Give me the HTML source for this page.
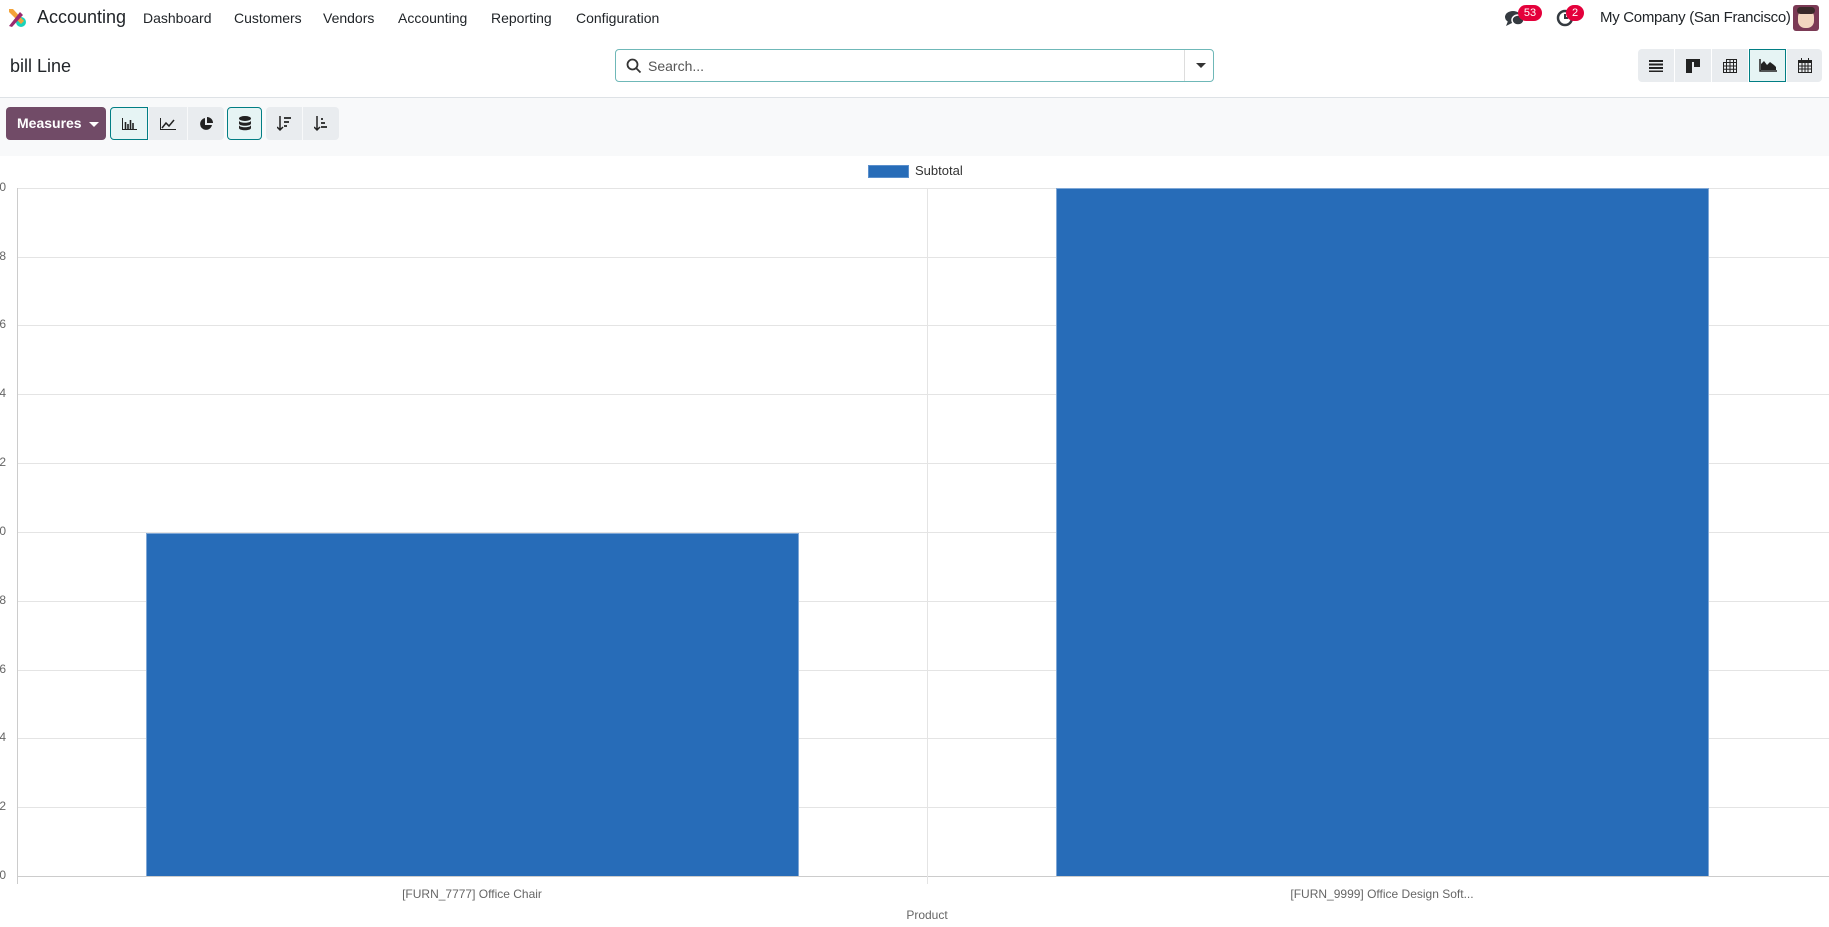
<!DOCTYPE html>
<html><head><meta charset="utf-8"><style>
*{box-sizing:border-box;margin:0;padding:0}
body{width:1829px;height:927px;overflow:hidden;background:#fff;font-family:"Liberation Sans",sans-serif;color:#212529;position:relative}
.a{position:absolute}
.nav{left:0;top:0;width:1829px;height:35px;background:#fff}
.nav span{position:absolute;top:10px;font-size:14px;color:#212529;white-space:nowrap}
.btn{position:absolute;background:#e9ecef;height:33px;display:flex;align-items:center;justify-content:center}
.act{background:#e6f4f4;border:1px solid #017e84}
.grid{position:absolute;left:17px;width:1812px;height:1px;background:#e4e4e4}
.yl{position:absolute;left:-6px;font-size:12px;color:#666;width:12px;text-align:right}
</style></head><body>
<div class="a nav">
 <svg class="a" style="left:6px;top:7px" width="21" height="21" viewBox="0 0 21 21"><circle cx="15" cy="15" r="5" fill="#1ad3bb"/><path d="M3 2h4l11 12-3 3L3 5z" fill="#f3a33a"/><path d="M3 19L14 5l3 3L6 20z" fill="#9b2a6f"/></svg>
 <span style="left:37px;top:7px;font-size:18px">Accounting</span>
 <span style="left:143px">Dashboard</span>
 <span style="left:234px">Customers</span>
 <span style="left:323px">Vendors</span>
 <span style="left:398px">Accounting</span>
 <span style="left:491px">Reporting</span>
 <span style="left:576px">Configuration</span>
 <svg class="a" style="left:1505px;top:10px" width="20" height="17" viewBox="0 0 20 17"><ellipse cx="8" cy="7" rx="8" ry="6" fill="#343a40"/><path d="M3 11l-2 5 6-3z" fill="#343a40"/><ellipse cx="13" cy="10" rx="6" ry="5" fill="#343a40" stroke="#fff" stroke-width="1.5"/></svg>
 <div class="a" style="left:1518px;top:5px;width:24px;height:16px;border-radius:8px;background:#e4003b;color:#fff;font-size:11px;text-align:center;line-height:16px">53</div>
 <svg class="a" style="left:1556px;top:9px" width="18" height="18" viewBox="0 0 18 18"><circle cx="9" cy="9" r="7" fill="none" stroke="#343a40" stroke-width="2.5"/><path d="M9 5v4h3" stroke="#343a40" stroke-width="2" fill="none"/></svg>
 <div class="a" style="left:1566px;top:5px;width:18px;height:16px;border-radius:8px;background:#e4003b;color:#fff;font-size:11px;text-align:center;line-height:16px">2</div>
 <span style="left:1600px;font-size:15px;top:9px;letter-spacing:-0.3px">My Company (San Francisco)</span>
 <div class="a" style="left:1793px;top:5px;width:26px;height:26px;border-radius:3px;background:#7b3a55;overflow:hidden"><div class="a" style="left:5px;top:5px;width:16px;height:18px;border-radius:7px;background:#f3d7c0"></div><div class="a" style="left:4px;top:2px;width:18px;height:7px;background:#3a2a2a;border-radius:4px"></div></div>
</div>
<div class="a" style="left:10px;top:56px;font-size:18px">bill Line</div>
<div class="a" style="left:615px;top:49px;width:599px;height:33px;border:1px solid #6fb8b8;border-radius:4px;background:#fff">
 <svg class="a" style="left:10px;top:8px" width="16" height="16" viewBox="0 0 16 16"><circle cx="6.5" cy="6.5" r="5" fill="none" stroke="#333" stroke-width="1.8"/><path d="M10 10l4.5 4.5" stroke="#333" stroke-width="1.8"/></svg>
 <span class="a" style="left:32px;top:8px;font-size:14px;color:#555">Search...</span>
 <div class="a" style="left:568px;top:0;width:1px;height:31px;background:#ddd"></div>
 <div class="a" style="left:580px;top:13px;border-left:5px solid transparent;border-right:5px solid transparent;border-top:5px solid #333"></div>
</div>
<div class="btn" style="left:1638px;top:49px;width:36px;border-radius:4px 0 0 4px"><svg width="14" height="12"><path d="M0 1h14M0 4.5h14M0 8h14M0 11.5h14" stroke="#222" stroke-width="2"/></svg></div>
<div class="btn" style="left:1675px;top:49px;width:36px"><svg width="14" height="14"><rect x="0" y="0" width="14" height="3" fill="#222"/><rect x="0" y="0" width="6" height="14" fill="#222"/><rect x="8" y="0" width="6" height="8" fill="#222"/></svg></div>
<div class="btn" style="left:1712px;top:49px;width:36px"><svg width="14" height="14"><path d="M3 .5h10.5v13h-13V3.5h13M.5 7h13M.5 10.3h13M3.5 .5v13M7 .5v13M10.5 .5v13" stroke="#222" fill="none"/></svg></div>
<div class="btn act" style="left:1749px;top:49px;width:37px"><svg width="18" height="13"><path d="M1 0v12h17" stroke="#222" fill="none" stroke-width="1.5"/><path d="M2 11V5l3-3 3 4 3-3 4 3 2 2v3z" fill="#222"/></svg></div>
<div class="btn" style="left:1787px;top:49px;width:35px;border-radius:0 4px 4px 0"><svg width="14" height="15"><rect x=".5" y="2.5" width="13" height="12" fill="none" stroke="#222"/><rect x="0" y="2" width="14" height="3" fill="#222"/><path d="M3.5 0v3M10.5 0v3M.5 8h13M.5 11h13M4 5v10M7 5v10M10 5v10" stroke="#222"/></svg></div>
<div class="a" style="left:0;top:97px;width:1829px;height:1px;background:#dee2e6"></div>
<div class="a" style="left:0;top:98px;width:1829px;height:58px;background:#f8f9fa"></div>
<div class="a" style="left:6px;top:107px;width:100px;height:33px;background:#714b67;border-radius:4px;color:#fff;font-size:14px;font-weight:bold;line-height:33px;padding-left:11px">Measures<span style="display:inline-block;margin-left:7px;vertical-align:middle;border-left:5px solid transparent;border-right:5px solid transparent;border-top:5px solid #fff"></span></div>
<div class="btn act" style="left:110px;top:107px;width:38px;border-radius:4px 0 0 4px"><svg width="15" height="12"><path d="M.5 0v11.5H15" stroke="#222" fill="none"/><path d="M3.5 4v7M6 6v5M8.5 2v9M11 5v6" stroke="#222" stroke-width="1.6"/></svg></div>
<div class="btn" style="left:149px;top:107px;width:38px"><svg width="16" height="12"><path d="M.5 0v11.5H16" stroke="#222" fill="none"/><path d="M2 10l4-5 3 3 5-6" stroke="#222" stroke-width="1.5" fill="none"/></svg></div>
<div class="btn" style="left:188px;top:107px;width:36px;border-radius:0 4px 4px 0"><svg width="14" height="14"><path d="M6 1a6 6 0 1 0 7 7H6z" fill="#222"/><path d="M8 0a6 6 0 0 1 6 6H8z" fill="#222"/></svg></div>
<div class="btn act" style="left:227px;top:107px;width:35px;border-radius:4px"><svg width="12" height="15"><ellipse cx="6" cy="2.5" rx="6" ry="2.5" fill="#222"/><path d="M0 4.5c0 3 12 3 12 0v3c0 3-12 3-12 0zM0 9c0 3 12 3 12 0v3c0 3-12 3-12 0z" fill="#222"/></svg></div>
<div class="btn" style="left:266px;top:107px;width:36px;border-radius:4px 0 0 4px"><svg width="14" height="16"><path d="M3 0v14M0 11l3 3 3-3" stroke="#222" stroke-width="1.5" fill="none"/><path d="M7 2h7M7 6h5M7 10h3" stroke="#222" stroke-width="1.8"/></svg></div>
<div class="btn" style="left:303px;top:107px;width:36px;border-radius:0 4px 4px 0"><svg width="14" height="16"><path d="M3 0v14M0 11l3 3 3-3" stroke="#222" stroke-width="1.5" fill="none"/><path d="M7 3h2M7 7h4M7 11h6" stroke="#222" stroke-width="1.8"/></svg></div>
<div class="a" style="left:868px;top:165px;width:41px;height:13px;background:#276cb8;border:1px solid #5a8fcc"></div>
<div class="a" style="left:915px;top:163px;font-size:13px;color:#333">Subtotal</div>
<div class="grid" style="top:188px"></div><div class="grid" style="top:257px"></div><div class="grid" style="top:325px"></div><div class="grid" style="top:394px"></div><div class="grid" style="top:463px"></div><div class="grid" style="top:532px"></div><div class="grid" style="top:601px"></div><div class="grid" style="top:670px"></div><div class="grid" style="top:738px"></div><div class="grid" style="top:807px"></div>
<div class="a" style="left:17px;top:876px;width:1812px;height:1px;background:#ccc"></div>
<div class="a" style="left:17px;top:188px;width:1px;height:696px;background:#ccc"></div>
<div class="a" style="left:927px;top:188px;width:1px;height:696px;background:#e4e4e4"></div>
<div class="yl" style="top:180px">0</div><div class="yl" style="top:249px">8</div><div class="yl" style="top:317px">6</div><div class="yl" style="top:386px">4</div><div class="yl" style="top:455px">2</div><div class="yl" style="top:524px">0</div><div class="yl" style="top:593px">8</div><div class="yl" style="top:662px">6</div><div class="yl" style="top:730px">4</div><div class="yl" style="top:799px">2</div><div class="yl" style="top:868px">0</div>
<div class="a" style="left:146px;top:533px;width:653px;height:343px;background:#276cb8;border:1px solid #7fa7d6;border-bottom:none"></div>
<div class="a" style="left:1056px;top:188px;width:653px;height:688px;background:#276cb8;border:1px solid #7fa7d6;border-bottom:none"></div>
<div class="a" style="left:272px;top:887px;width:400px;text-align:center;font-size:12px;color:#666">[FURN_7777] Office Chair</div>
<div class="a" style="left:1182px;top:887px;width:400px;text-align:center;font-size:12px;color:#666">[FURN_9999] Office Design Soft...</div>
<div class="a" style="left:827px;top:908px;width:200px;text-align:center;font-size:12px;color:#666">Product</div>
</body></html>
